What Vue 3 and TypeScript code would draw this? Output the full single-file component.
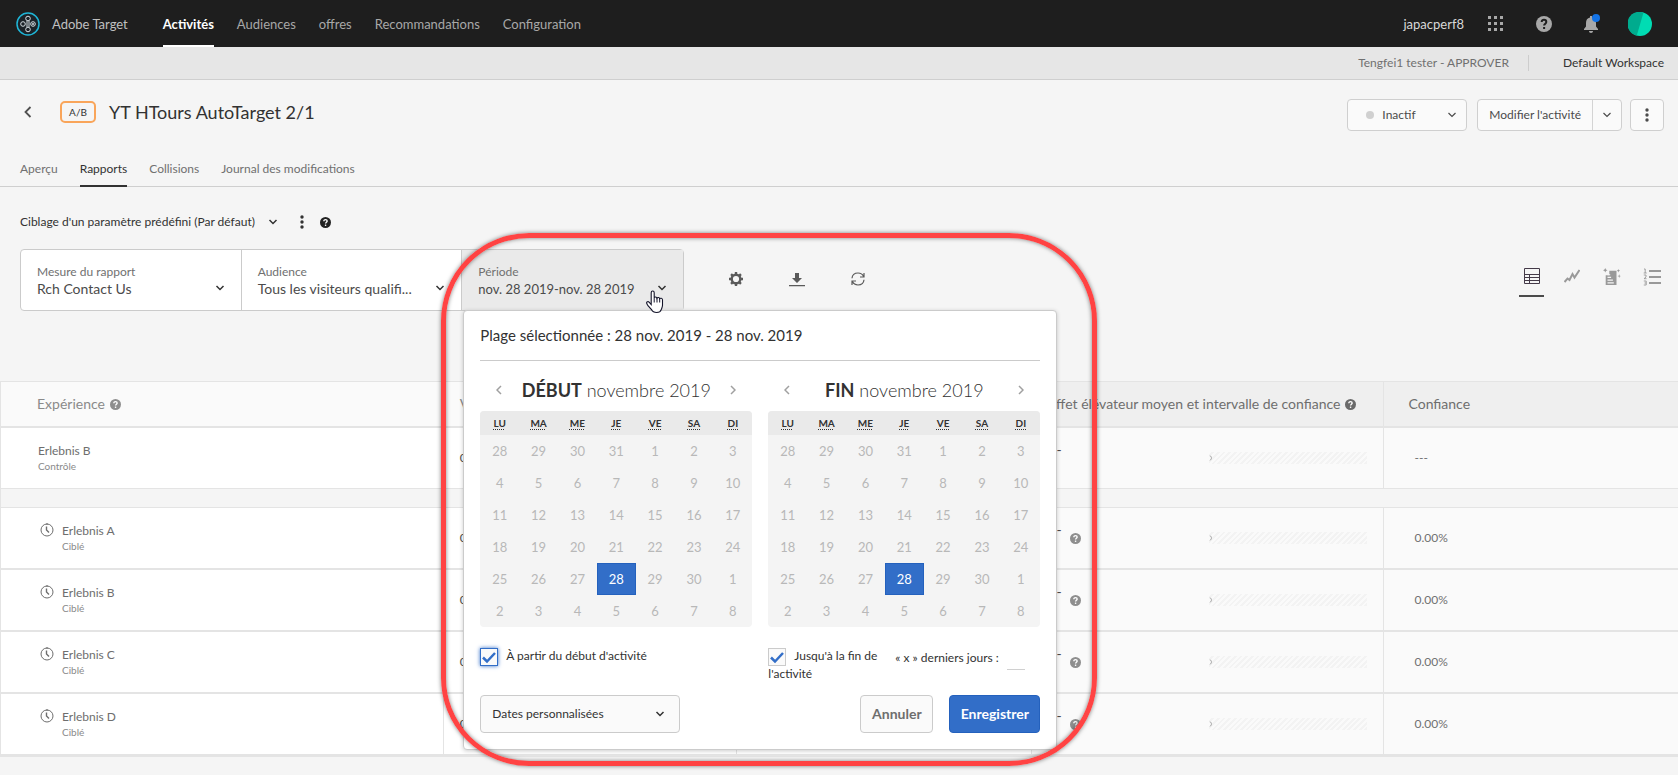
<script setup lang="ts">
import { ref } from 'vue'

interface Row {
  name: string
  kind: string
  visitors: string
  lift: string
  confidence: string
  control: boolean
}

interface Calendar {
  id: string
  title: string
  month: string
}

const nav = ['Activités', 'Audiences', 'offres', 'Recommandations', 'Configuration']
const tabs = ['Aperçu', 'Rapports', 'Collisions', 'Journal des modifications']
const weekdays = [
  ['LU', 'lundi'], ['MA', 'mardi'], ['ME', 'mercredi'], ['JE', 'jeudi'],
  ['VE', 'vendredi'], ['SA', 'samedi'], ['DI', 'dimanche'],
]
const calendars: Calendar[] = [
  { id: 'debut', title: 'DÉBUT', month: 'novembre 2019' },
  { id: 'fin', title: 'FIN', month: 'novembre 2019' },
]
const weeks: number[][] = [
  [28, 29, 30, 31, 1, 2, 3],
  [4, 5, 6, 7, 8, 9, 10],
  [11, 12, 13, 14, 15, 16, 17],
  [18, 19, 20, 21, 22, 23, 24],
  [25, 26, 27, 28, 29, 30, 1],
  [2, 3, 4, 5, 6, 7, 8],
]
const isSelected = (w: number, d: number): boolean => w === 4 && d === 3

const control: Row[] = [
  { name: 'Erlebnis B', kind: 'Contrôle', visitors: '0', lift: '---', confidence: '---', control: true },
]
const targeted: Row[] = ['A', 'B', 'C', 'D'].map((l) => ({
  name: `Erlebnis ${l}`, kind: 'Ciblé', visitors: '0', lift: '---', confidence: '0.00%', control: false,
}))
const groups: Row[][] = [control, targeted]

const fromStart = ref(true)
const untilEnd = ref(true)
const lastDays = ref('')
const preset = ref('custom')
</script>

<template>
  <div class="page">
    <header class="topbar">
      <svg class="logo" viewBox="0 0 24 24" aria-hidden="true">
        <circle cx="12" cy="12" r="11" fill="#1b2228" stroke="#1fb5d6" stroke-width="1.5" />
        <g fill="none" stroke="#d5dde2" stroke-width="1">
          <circle cx="12" cy="6.500" r="2.300" />
          <circle cx="7" cy="12" r="2.300" />
          <circle cx="17" cy="12" r="2.300" />
          <circle cx="12" cy="17.500" r="2.300" />
          <path d="M11 9v6M13 9v6" />
        </g>
        <circle cx="17" cy="12" r="1" fill="#d5dde2" />
      </svg>
      <span class="product">Adobe Target</span>
      <nav class="nav">
        <a v-for="(item, i) in nav" :key="item" href="#" :class="{ active: i === 0 }">{{ item }}</a>
      </nav>
      <div class="tools">
        <span class="org">japacperf8</span>
        <button type="button" aria-label="Applications">
          <svg class="i16" viewBox="0 0 16 16" fill="#a8a8a8">
            <path d="M0 0h3v3H0zM6 0h3v3H6zM12 0h3v3h-3zM0 6h3v3H0zM6 6h3v3H6zM12 6h3v3h-3zM0 12h3v3H0zM6 12h3v3H6zM12 12h3v3h-3z" />
          </svg>
        </button>
        <button type="button" aria-label="Aide">
          <svg class="i16" viewBox="0 0 16 16">
            <circle cx="8" cy="8" r="8" fill="#a8a8a8" />
            <path d="M5.700 6.100C5.700 4.500 6.700 3.800 8 3.800s2.300.8 2.300 2.100c0 1.700-2.200 1.800-2.200 3.700" fill="none" stroke="#1e1e1e" stroke-width="2" />
            <rect x="7.100" y="11" width="2" height="2" fill="#1e1e1e" />
          </svg>
        </button>
        <button type="button" aria-label="Notifications">
          <svg class="bell" viewBox="0 0 16 20">
            <path d="M6 3.500V2h2v1.500c2.600.5 4 2.400 4 5.500v3.500l2 2.500v1H0v-1l2-2.500V9c0-3.100 1.400-5 4-5.500z" fill="#a8a8a8" />
            <path d="M5 17h4c0 1.200-.8 2-2 2s-2-.8-2-2z" fill="#a8a8a8" />
            <circle cx="12" cy="4" r="4" fill="#1473e6" />
          </svg>
        </button>
        <button type="button" class="account" aria-label="Compte">
          <svg class="i24" viewBox="0 0 24 24">
            <circle cx="12" cy="12" r="12" fill="#00dcb3" />
            <path d="M15.500.5A12 12 0 1 0 8.800 23.500z" fill="#00ab8e" />
          </svg>
        </button>
      </div>
    </header>

    <div class="subbar">
      <span class="role">Tengfei1 tester - APPROVER</span>
      <a class="workspace" href="#">Default Workspace</a>
    </div>

    <section class="heading">
      <div class="identity">
        <button type="button" class="back" aria-label="Retour">
          <svg viewBox="0 0 8 12" fill="none" stroke="#505050" stroke-width="1.800"><path d="M6.500 1L1.500 6l5 5" /></svg>
        </button>
        <span class="badge">A/B</span>
        <h1>YT HTours AutoTarget 2/1</h1>
      </div>
      <div class="actions">
        <button type="button" class="btn status">
          <span class="dot"></span><span>Inactif</span>
          <svg class="chev" viewBox="0 0 10 6"><path d="M1.500 1L5 4.500 8.500 1" /></svg>
        </button>
        <div class="split">
          <button type="button">Modifier l'activité</button>
          <button type="button" class="more" aria-label="Autres modifications">
            <svg class="chev" viewBox="0 0 10 6"><path d="M1.500 1L5 4.500 8.500 1" /></svg>
          </button>
        </div>
        <button type="button" class="btn kebab" aria-label="Plus">
          <svg class="dots" viewBox="0 0 4 14"><circle cx="2" cy="2" r="1.700" /><circle cx="2" cy="7" r="1.700" /><circle cx="2" cy="12" r="1.700" /></svg>
        </button>
      </div>
    </section>

    <nav class="tabs">
      <a v-for="(t, i) in tabs" :key="t" href="#" :class="{ active: i === 1 }">{{ t }}</a>
    </nav>

    <div class="preset">
      <button type="button" class="preset-name">
        Ciblage d'un paramètre prédéfini (Par défaut)
        <svg class="chev" viewBox="0 0 10 6"><path d="M1.500 1L5 4.500 8.500 1" /></svg>
      </button>
      <button type="button" class="preset-more" aria-label="Options">
        <svg class="dots" viewBox="0 0 4 14"><circle cx="2" cy="2" r="1.700" /><circle cx="2" cy="7" r="1.700" /><circle cx="2" cy="12" r="1.700" /></svg>
      </button>
      <svg class="help dark" viewBox="0 0 16 16"><circle cx="8" cy="8" r="8" /><path d="M5.600 6.200C5.600 4.500 6.700 3.800 8 3.800s2.400.8 2.400 2.100c0 1.700-2.300 1.800-2.300 3.700" /><rect x="7.100" y="11" width="2" height="2" /></svg>
    </div>

    <div class="toolbar">
      <div class="fields">
        <button type="button" class="field">
          <span class="label">Mesure du rapport</span>
          <span class="value">Rch Contact Us</span>
          <svg class="chev" viewBox="0 0 10 6"><path d="M1.500 1L5 4.500 8.500 1" /></svg>
        </button>
        <button type="button" class="field">
          <span class="label">Audience</span>
          <span class="value">Tous les visiteurs qualifi...</span>
          <svg class="chev" viewBox="0 0 10 6"><path d="M1.500 1L5 4.500 8.500 1" /></svg>
        </button>
        <div class="period">
          <button type="button" class="field open" aria-expanded="true">
            <span class="label">Période</span>
            <span class="value">nov. 28 2019-nov. 28 2019</span>
            <svg class="chev" viewBox="0 0 10 6"><path d="M1.500 1L5 4.500 8.500 1" /></svg>
          </button>

          <div class="popover" role="dialog" aria-label="Période">
            <h2>Plage sélectionnée : 28 nov. 2019 - 28 nov. 2019</h2>
            <div class="calendars">
              <div v-for="c in calendars" :key="c.id" class="calendar">
                <div class="month">
                  <button type="button" aria-label="Mois précédent">
                    <svg viewBox="0 0 6 10"><path d="M5 1L1 5l4 4" /></svg>
                  </button>
                  <span><strong>{{ c.title }}</strong> {{ c.month }}</span>
                  <button type="button" aria-label="Mois suivant">
                    <svg viewBox="0 0 6 10"><path d="M1 1l4 4-4 4" /></svg>
                  </button>
                </div>
                <table class="days">
                  <thead>
                    <tr><th v-for="d in weekdays" :key="d[0]" scope="col"><abbr :title="d[1]">{{ d[0] }}</abbr></th></tr>
                  </thead>
                  <tbody>
                    <tr v-for="(w, wi) in weeks" :key="wi">
                      <td v-for="(n, di) in w" :key="di">
                        <button type="button" :class="{ selected: isSelected(wi, di) }">{{ n }}</button>
                      </td>
                    </tr>
                  </tbody>
                </table>
              </div>
            </div>
            <div class="options">
              <div class="option">
                <label><input v-model="fromStart" type="checkbox" class="focus" />À partir du début d'activité</label>
              </div>
              <div class="option pair">
                <label><input v-model="untilEnd" type="checkbox" />Jusqu'à la fin de l'activité</label>
                <label class="last" for="last-days">« x » derniers jours :<input id="last-days" v-model="lastDays" type="text" /></label>
              </div>
            </div>
            <div class="footer">
              <div class="select">
                <select v-model="preset" aria-label="Plage de dates">
                  <option value="custom">Dates personnalisées</option>
                </select>
                <svg class="chev" viewBox="0 0 10 6"><path d="M1.500 1L5 4.500 8.500 1" /></svg>
              </div>
              <button type="button" class="cancel">Annuler</button>
              <button type="button" class="save">Enregistrer</button>
            </div>
            <div class="ring"></div>
          </div>

          <svg class="pointer" viewBox="0 0 18 24">
            <path d="M5.200 14.500V2.700c0-2.200 3-2.200 3 0v5.100c.3-1.200 2.500-1.200 2.800.3.500-1 2.500-.9 2.700.6.700-.7 2.600-.6 2.800 1v5.600c0 1.800-.7 2.700-1.300 4.300-.5 1.700-2 2.900-4.500 2.900-3 0-4.300-1-5.200-3L2.200 16C1.400 14.500.6 13.700.6 12.800c0-1.100 1.500-1.600 2.500-.7z" fill="#fff" stroke="#14142a" stroke-width="1.100" />
            <path d="M8.200 7.800v4.700M11 8v4.500M13.700 8.700v3.800" fill="none" stroke="#14142a" />
          </svg>
        </div>
      </div>

      <div class="tool-icons">
        <button type="button" aria-label="Paramètres">
          <svg class="i16" viewBox="0 0 16 16">
            <circle cx="8" cy="8" r="4.300" fill="none" stroke="#5a5a5a" stroke-width="2.400" />
            <path d="M8 1v2.500M8 12.500V15M1 8h2.500M12.500 8H15M3.050 3.050L4.800 4.800M11.200 11.200l1.750 1.750M3.050 12.950L4.800 11.200M11.200 4.800l1.750-1.750" stroke="#5a5a5a" stroke-width="2.400" />
          </svg>
        </button>
        <button type="button" aria-label="Télécharger">
          <svg class="i16" viewBox="0 0 16 16"><path d="M6 2h4v5h3l-5 5-5-5h3zM0 14h16v1.200H0z" fill="#5a5a5a" /></svg>
        </button>
        <button type="button" aria-label="Actualiser">
          <svg class="i16" viewBox="0 0 16 16" fill="none" stroke="#5a5a5a" stroke-width="1.200"><path d="M2 7.200C2.300 4 4.900 2 8 2c2.600 0 4.600 1.300 5.600 3.400M14 2v4h-4M14 8.800C13.700 12 11.100 14 8 14c-2.600 0-4.600-1.300-5.600-3.400M2 14v-4h4" /></svg>
        </button>
      </div>

      <div class="views">
        <button type="button" class="active" aria-label="Tableau">
          <svg class="i16" viewBox="0 0 16 16" fill="none" stroke="#443a48"><path d="M.5.500h15v15H.500zM0 6.500h16M0 9.500h16M0 12.500h16M5.500 6.500v9" /></svg>
        </button>
        <button type="button" aria-label="Graphique">
          <svg class="i16" viewBox="0 0 16 16" fill="none" stroke="#999" stroke-width="2"><path d="M.500 14l3-3.500 2 1.500 3-6 2 3.500L15.500 2" /></svg>
        </button>
        <button type="button" aria-label="Offres automatiques">
          <svg class="view-wide" viewBox="0 0 20 20">
            <path d="M7 3h8v16H3V8h4z" fill="#999" />
            <path d="M5 7.500h3M5 10.500h4M5 13.500h6M5 16.500h7" stroke="#f5f5f5" stroke-width="1.300" />
            <path d="M2.500 0l.8 1.700 1.700.8-1.700.8-.8 1.700-.8-1.700L0 2.500l1.700-.8zM17 1l.5 1.200L19 3l-1.500.5L17 5l-.5-1.500L15.500 3l1-.8zM18 7l.5 1.500L20 9l-1.500.5L18 11l-.5-1.500L16 9l1.500-.5z" fill="#999" />
          </svg>
        </button>
        <button type="button" aria-label="Liste ordonnée">
          <svg class="i18" viewBox="0 0 18 18" fill="none" stroke="#999">
            <path d="M6 3h12M6 9h12M6 15h12" stroke-width="1.800" />
            <path d="M1 1h1.200v4M.700 5h3M.800 7h2.200v2L1 10.700h2.500M.800 13h2.400v4H.800M1.500 15h1.700" stroke-width=".9" />
          </svg>
        </button>
      </div>
    </div>

    <table class="report">
      <colgroup><col class="c1" /><col class="c2" /><col class="c3" /><col class="c4" /><col /></colgroup>
      <thead>
        <tr>
          <th scope="col">Expérience
            <svg class="help" viewBox="0 0 16 16"><circle cx="8" cy="8" r="8" /><path d="M5.600 6.200C5.600 4.500 6.700 3.800 8 3.800s2.400.8 2.400 2.100c0 1.700-2.300 1.800-2.300 3.700" /><rect x="7.100" y="11" width="2" height="2" /></svg>
          </th>
          <th scope="col">Visiteurs</th>
          <td></td>
          <th scope="col" class="shade">Effet élévateur moyen et intervalle de confiance
            <svg class="help mid" viewBox="0 0 16 16"><circle cx="8" cy="8" r="8" /><path d="M5.600 6.200C5.600 4.500 6.700 3.800 8 3.800s2.400.8 2.400 2.100c0 1.700-2.300 1.800-2.300 3.700" /><rect x="7.100" y="11" width="2" height="2" /></svg>
          </th>
          <th scope="col" class="shade last-head">Confiance</th>
        </tr>
      </thead>
      <template v-for="(g, gi) in groups" :key="gi">
        <tbody v-if="gi > 0" class="gap"><tr><td colspan="5"></td></tr></tbody>
        <tbody>
          <tr v-for="r in g" :key="r.name">
            <td>
              <div class="exp" :class="{ control: r.control }">
                <svg v-if="!r.control" class="clock" viewBox="0 0 14 14" fill="none" stroke="#6e6e6e"><circle cx="7" cy="7" r="6" stroke-width="1" /><path d="M7 0v2" /><path d="M6.500 3.500V7l2.500 2.500" stroke-width="1.400" /></svg>
                <div><div class="name">{{ r.name }}</div><div class="kind">{{ r.kind }}</div></div>
              </div>
            </td>
            <td class="num">{{ r.visitors }}</td>
            <td></td>
            <td class="shade">
              <div class="lift">
                <span>{{ r.lift }}</span>
                <svg v-if="!r.control" class="help" viewBox="0 0 16 16"><circle cx="8" cy="8" r="8" /><path d="M5.600 6.200C5.600 4.500 6.700 3.800 8 3.800s2.400.8 2.400 2.100c0 1.700-2.300 1.800-2.300 3.700" /><rect x="7.100" y="11" width="2" height="2" /></svg>
                <div class="bar"><svg viewBox="0 0 4 6"><path d="M.800.500C3 2 3 4 .800 5.500" fill="none" stroke="#a0a0a0" /></svg></div>
              </div>
            </td>
            <td class="shade conf">{{ r.confidence }}</td>
          </tr>
        </tbody>
      </template>
    </table>
  </div>
</template>

<style>
body { margin: 0; background: #f5f5f5; }
</style>

<style scoped>
.page {
  min-height: 100vh;
  box-sizing: border-box;
  background: #f5f5f5;
  color: #323232;
  font-family: Lato, "Open Sans", sans-serif;
  font-size: 12px;
  line-height: 16px;
}
.page *, .page *::before, .page *::after { box-sizing: border-box; }
button { margin: 0; padding: 0; border: 0; background: none; color: inherit; font: inherit; cursor: pointer; }
a { color: inherit; text-decoration: none; }
svg { display: block; flex: none; }
.i16 { width: 16px; height: 16px; }
.i18 { width: 18px; height: 18px; }
.i24 { width: 24px; height: 24px; }
.chev { width: 10px; height: 6px; }
.chev path { fill: none; stroke: currentColor; stroke-width: 1.500; }
.dots { width: 4px; height: 14px; fill: currentColor; }
.help { width: 11px; height: 11px; fill: #8e8e8e; }
.help path { fill: none; stroke: #fff; stroke-width: 2; }
.help rect { fill: #fff; }
.help.dark { fill: #222; }
.help.mid { fill: #6a6a6a; }

.topbar { display: flex; align-items: center; height: 47px; padding: 0 26px 0 16px; background: #1e1e1e; color: #b8b8b8; font-size: 13px; }
.logo { width: 24px; height: 24px; }
.product { margin-left: 12px; color: #c0c0c0; }
.nav { display: flex; gap: 23px; height: 100%; margin-left: 35px; }
.nav a { display: flex; align-items: center; border-top: 2px solid transparent; border-bottom: 2px solid transparent; color: #a8a8a8; }
.nav a.active { color: #fff; font-weight: 700; border-bottom-color: #fff; }
.tools { display: flex; align-items: center; gap: 32px; margin-left: auto; }
.org { margin-right: -8px; color: #d8d8d8; }
.bell { width: 16px; height: 20px; }
.account { margin-left: -4px; }

.subbar { display: flex; justify-content: flex-end; align-items: center; height: 33px; padding-right: 14px; background: #e6e6e6; border-bottom: 1px solid #cfcfcf; }
.role { padding-right: 19px; border-right: 1px solid #cdcdcd; color: #707070; }
.workspace { margin-left: 34px; }

.heading { display: flex; align-items: center; padding: 19px 14px 0 24px; }
.identity { display: flex; align-items: center; padding-bottom: 6px; }
.back svg { width: 8px; height: 12px; }
.badge { display: grid; place-items: center; width: 36px; height: 22px; margin-left: 28px; border: 2px solid #f9a55a; border-radius: 5px; font-size: 10px; }
h1 { margin: 0 0 0 13px; font-size: 18px; line-height: 24px; font-weight: 400; }
.actions { display: flex; gap: 10px; margin-left: auto; color: #4b4b4b; }
.actions .chev path { stroke-width: 1.200; }
.btn, .split { display: flex; align-items: center; height: 32px; background: #fafafa; border: 1px solid #cfcfcf; border-radius: 4px; }
.status { width: 120px; padding: 0 9px 0 18px; }
.status .chev { margin-left: auto; }
.dot { width: 8px; height: 8px; margin-right: 8px; border-radius: 50%; background: #d0d0d0; }
.split button { height: 100%; padding: 0 11px; }
.split .more { border-left: 1px solid #d4d4d4; padding: 0 9px; }
.kebab { width: 34px; justify-content: center; margin-left: -2px; }

.tabs { display: flex; gap: 22px; height: 56px; padding: 0 20px; border-bottom: 1px solid #cfcfcf; color: #707070; }
.tabs a { height: 56px; padding-top: 30px; border-bottom: 2px solid transparent; }
.tabs a.active { color: #323232; border-bottom-color: #323232; }

.preset { display: flex; align-items: center; height: 62px; padding: 8px 20px 0; }
.preset-name { display: flex; align-items: center; gap: 13px; }
.preset-more { margin: 0 16px 0 22px; }

.toolbar { display: flex; align-items: flex-start; height: 132px; padding: 0 14px 0 20px; }
.fields { display: grid; grid-template-columns: repeat(3, minmax(0, 1fr)); width: 664px; height: 62px; border: 1px solid #cbcbcb; border-radius: 4px; background: #fff; }
.field { display: grid; grid-template-columns: minmax(0, 1fr) auto; grid-template-rows: 17px 17px; align-content: center; align-items: center; height: 100%; padding: 0 16px; text-align: left; border-right: 1px solid #cbcbcb; }
.field .chev { margin-bottom: 2px; }
.label { grid-column: 1 / 3; color: #707070; }
.value { color: #4b4b4b; font-size: 14px; white-space: nowrap; }
.period { position: relative; }
.field.open { width: 100%; background: #eaeaea; border-right: 0; }
.field.open .value { font-size: 13px; }

.popover { position: absolute; z-index: 2; top: 60px; left: 1px; width: 594px; padding: 0 16px; background: #fff; border: 1px solid #cbcbcb; border-radius: 4px; box-shadow: 0 1px 4px rgba(0, 0, 0, .2); }
h2 { margin: 0 0 17px; padding: 13px 0; border-bottom: 1px solid #cbcbcb; font-size: 15px; line-height: 23px; font-weight: 400; }
.calendars, .options { display: grid; grid-template-columns: 1fr 1fr; column-gap: 16px; }
.month { display: flex; justify-content: space-between; align-items: center; height: 24px; margin-bottom: 9px; padding: 0 16px; font-size: 18px; font-weight: 300; }
.month strong { font-weight: 700; }
.month svg { width: 6px; height: 10px; fill: none; stroke: #a0a0a0; stroke-width: 1.500; }
.days { width: 100%; table-layout: fixed; border-spacing: 0; border-radius: 4px; overflow: hidden; background: #f4f4f4; }
.days th { height: 24px; padding: 0; background: #eaeaea; font-size: 10px; line-height: 14px; }
.days td { height: 32px; padding: 0; }
.days button { display: block; width: 100%; height: 32px; color: #b8b8b8; font-size: 13px; cursor: default; }
.days button.selected { background: #326ec8; border: 1px solid #2461bd; color: #fff; }
abbr { text-decoration: underline dotted; text-underline-offset: 2px; }

.options { padding-top: 21px; height: 68px; line-height: 15px; }
.option input[type="checkbox"] { appearance: none; width: 18px; height: 18px; margin: 0 8px 0 0; vertical-align: middle; border: 1px solid #cbcbcb; background: #fafafa; }
.option input[type="checkbox"]:checked { background: #fafafa url("data:image/svg+xml,%3Csvg xmlns='http://www.w3.org/2000/svg' viewBox='0 0 16 16'%3E%3Cpath d='M2 8.500l4 4L14 4' fill='none' stroke='%23326ec8' stroke-width='2.500'/%3E%3C/svg%3E") center / 16px 16px no-repeat; }
.option input.focus { border-color: #326ec8; box-shadow: 0 0 4px #326ec8; }
.pair { display: grid; grid-template-columns: 127px 1fr; }
.last { display: flex; align-items: flex-start; gap: 8px; padding-top: 2px; white-space: nowrap; }
.last input { width: 18px; height: 20px; padding: 0; border: 0; border-bottom: 1px solid #d0d0d0; background: none; font: inherit; }
.footer { display: flex; gap: 16px; padding-bottom: 16px; font-size: 14px; font-weight: 700; }
.select { position: relative; width: 200px; margin-right: auto; }
select { appearance: none; width: 100%; height: 38px; padding: 0 11px; border: 1px solid #cbcbcb; border-radius: 4px; background: #fafafa; color: #323232; font: 400 12px/16px Lato, "Open Sans", sans-serif; }
.select .chev { position: absolute; right: 15px; top: 16px; pointer-events: none; }
.cancel, .save { height: 38px; border: 1px solid #cbcbcb; border-radius: 4px; }
.cancel { width: 73px; background: #fafafa; color: #6e6e6e; }
.save { width: 91px; background: #326ec8; border-color: #2461bd; color: #fff; }
.ring { position: absolute; inset: -78px -41px -17px -23px; border: 5px solid #ff4343; border-radius: 88px; box-shadow: 0 0 4px rgba(0, 0, 0, .5), inset 0 0 4px rgba(0, 0, 0, .5); pointer-events: none; }
.pointer { position: absolute; z-index: 3; left: 184px; top: 40px; width: 18px; height: 24px; pointer-events: none; }

.tool-icons { display: flex; gap: 45px; margin: 22px 0 0 44px; }
.views { display: flex; gap: 15px; margin: 19px 0 0 auto; }
.views button { display: grid; justify-items: center; align-items: start; width: 25px; height: 29px; border-bottom: 2px solid transparent; }
.views .active { border-bottom-color: #4b4b4b; }
.view-wide { width: 20px; height: 18px; }

.report { width: 100%; table-layout: fixed; border-collapse: separate; border-spacing: 0; border: 1px solid #e4e4e4; border-right: 0; background: #fff; }
.c1 { width: 26.4%; }
.c2 { width: 17.5%; }
.c3 { width: 17.6%; }
.c4 { width: 21%; }
.report > thead th, .report > thead td { height: 46px; padding: 0 0 0 16px; background: #fafafa; border-bottom: 2px solid #e4e4e4; border-right: 1px solid #e4e4e4; text-align: left; font-weight: 400; font-size: 14px; white-space: nowrap; color: #8a8a8a; }
.report > thead th:first-child { padding-left: 36px; border-right: 0; }
.report > thead th .help { display: inline-block; margin-left: 1px; vertical-align: -1px; }
.report > thead th.shade { background: #efefef; color: #6e6e6e; }
.report > thead th.last-head { padding-left: 24px; }
.report > tbody td { height: 62px; padding: 0; border-bottom: 2px solid #e4e4e4; border-right: 1px solid #e4e4e4; }
.report td:last-child, .report th:last-child { border-right: 0; }
.report > tbody:nth-of-type(1) td { height: 61px; border-bottom-width: 1px; }
.report > tbody.gap td { height: 19px; background: #f5f5f5; border-bottom-width: 1px; }
.report td.shade { background: #fafafa; color: #707070; }
.exp { display: flex; gap: 8px; padding-left: 39px; color: #6e6e6e; }
.exp.control { padding-left: 37px; }
.clock { width: 14px; height: 14px; }
.kind { font-size: 10px; line-height: 14px; color: #8a8a8a; }
.report > tbody td.num { padding-left: 16px; color: #4b4b4b; }
.lift { display: flex; align-items: center; padding: 0 16px 0 19px; }
.lift .help { margin-left: 4px; }
.lift > span { width: 15px; font-size: 14px; color: #4b4b4b; }
.bar { width: 158px; height: 12px; margin-left: auto; padding: 3px 0; background: repeating-linear-gradient(135deg, #fafafa 0 2px, #f3f3f3 2px 4px); }
.bar svg { width: 4px; height: 6px; }
.report > tbody td.conf { padding-left: 30px; }
</style>
